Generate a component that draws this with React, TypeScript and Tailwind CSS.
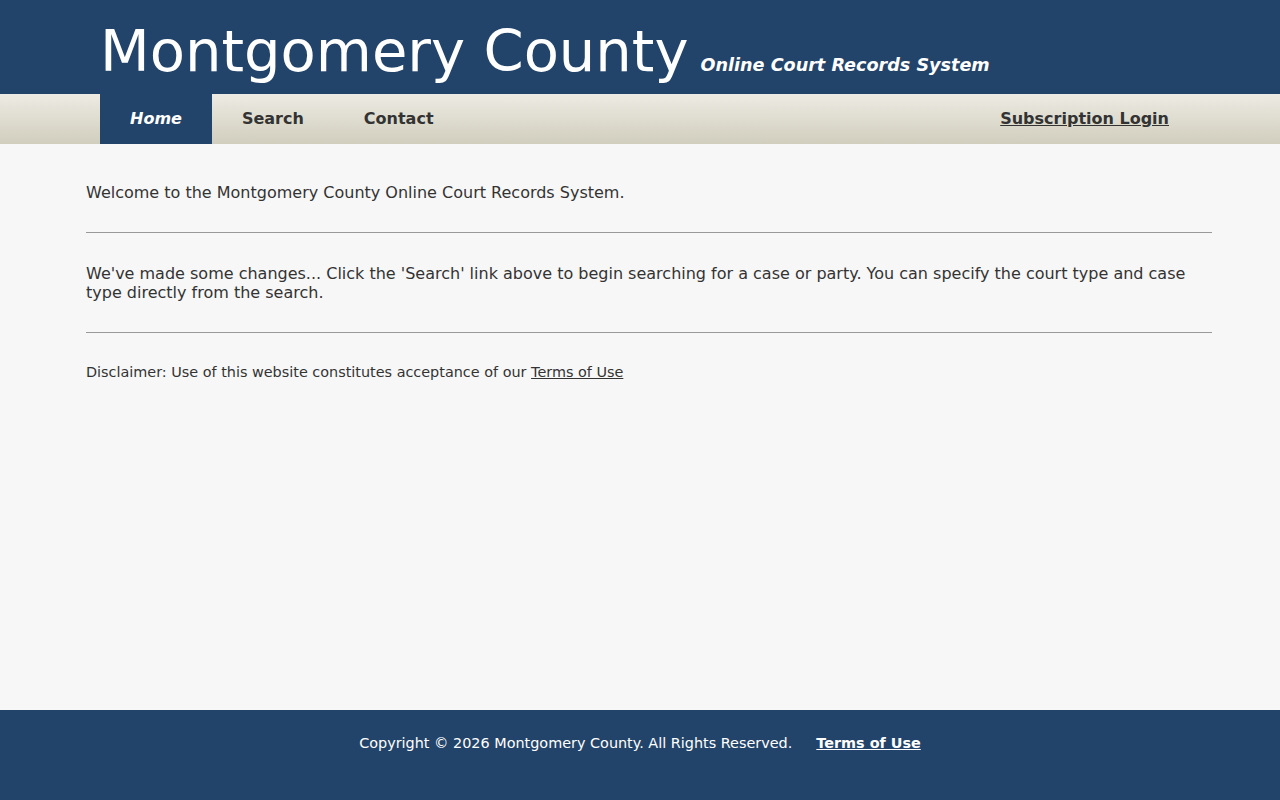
import React from "react";

const font = { fontFamily: '"DejaVu Sans", sans-serif' };

const NavLink: React.FC<{ label: string; active?: boolean }> = ({ label, active }) => (
  <a
    href="#"
    className={
      active
        ? "flex items-center px-[30px] bg-[#23446a] text-white italic font-bold"
        : "flex items-center px-[30px] text-[#333] font-bold"
    }
  >
    {label}
  </a>
);

export default function App() {
  return (
    <div className="min-h-screen flex flex-col bg-[#f7f7f7] text-[#333]" style={font}>
      {/* cabecera */}
      <header className="bg-[#23446a] h-[94px] flex items-end pl-[100px]">
        <div className="flex items-baseline gap-[12px] pb-[13px]">
          <h1 className="text-[57.6px] leading-none text-white font-normal">Montgomery County</h1>
          <span className="text-[17.6px] text-white font-bold italic">Online Court Records System</span>
        </div>
      </header>

      {/* navegación */}
      <nav className="h-[50px] bg-gradient-to-b from-[#edebe3] to-[#d1cebe] flex pl-[100px] pr-[111px] text-[16px]">
        <NavLink label="Home" active />
        <NavLink label="Search" />
        <NavLink label="Contact" />
        <a href="#" className="ml-auto flex items-center font-bold text-[#333] underline">
          Subscription Login
        </a>
      </nav>

      {/* contenido */}
      <main className="flex-1 px-[86px] pr-[68px] pt-[39px] text-[16px] leading-[19px]">
        <p>Welcome to the Montgomery County Online Court Records System.</p>
        <hr className="mt-[30px] border-0 border-t border-[#999]" />
        <p className="mt-[31px]">
          We've made some changes... Click the 'Search' link above to begin searching for a case or party. You can specify the court type and case type directly from the search.
        </p>
        <hr className="mt-[30px] border-0 border-t border-[#999]" />
        <p className="mt-[31px] text-[14.4px] leading-[17px]">
          Disclaimer: Use of this website constitutes acceptance of our{" "}
          <a href="#" className="underline">Terms of Use</a>
        </p>
      </main>

      {/* pie */}
      <footer className="h-[90px] bg-[#23446a] text-white text-[14.4px] flex justify-center pt-[25px]">
        <div className="flex gap-[24px] h-[17px] leading-[17px]">
          <span>Copyright © 2026 Montgomery County. All Rights Reserved.</span>
          <a href="#" className="font-bold underline">Terms of Use</a>
        </div>
      </footer>
    </div>
  );
}
